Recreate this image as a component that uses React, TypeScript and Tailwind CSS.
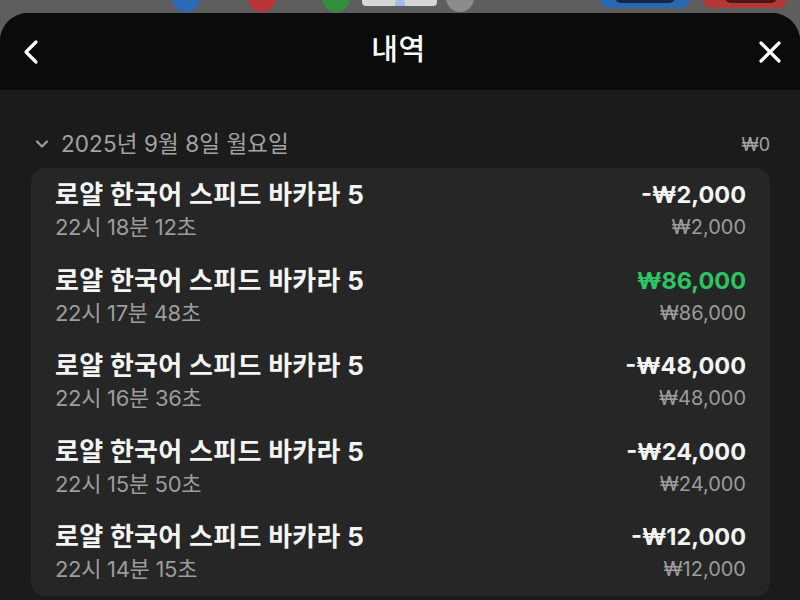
import React from 'react';

type Entry = {
  game: string;
  time: string;
  amount: string;
  bet: string;
  win?: boolean;
};

const entries: Entry[] = [
  { game: '로얄 한국어 스피드 바카라 5', time: '22시 18분 12초', amount: '-₩2,000', bet: '₩2,000' },
  { game: '로얄 한국어 스피드 바카라 5', time: '22시 17분 48초', amount: '₩86,000', bet: '₩86,000', win: true },
  { game: '로얄 한국어 스피드 바카라 5', time: '22시 16분 36초', amount: '-₩48,000', bet: '₩48,000' },
  { game: '로얄 한국어 스피드 바카라 5', time: '22시 15분 50초', amount: '-₩24,000', bet: '₩24,000' },
  { game: '로얄 한국어 스피드 바카라 5', time: '22시 14분 15초', amount: '-₩12,000', bet: '₩12,000' },
];

const font = { fontFamily: 'Inter, "Noto Sans CJK KR", sans-serif' };

// dimmed app icons peeking out behind the sheet
const Backdrop = () => (
  <div className="h-[13px] bg-[#5e5e5e] overflow-hidden flex items-start pl-[172px]">
    <div className="-mt-[16px] w-[28px] h-[28px] shrink-0 rounded-full bg-[#2b6bb8]" />
    <div className="-mt-[16px] ml-[48px] w-[28px] h-[28px] shrink-0 rounded-full bg-[#b93436]" />
    <div className="-mt-[16px] ml-[46px] w-[28px] h-[28px] shrink-0 rounded-full bg-[#2f8f3c]" />
    <div className="-mt-[10px] ml-[12px] w-[75px] h-[16px] shrink-0 rounded-[4px] bg-[#d6d6d6] flex justify-center items-end">
      <div className="w-[10px] h-[8px] rounded-t-full bg-[#9cc2ea]" />
    </div>
    <div className="-mt-[16px] ml-[9px] w-[28px] h-[28px] shrink-0 rounded-full bg-[#8c8c8c]" />
    <div className="-mt-[10px] ml-[126px] w-[90px] h-[18px] shrink-0 rounded-[8px] bg-[#2a68b0] flex justify-center">
      <div className="w-[60px] h-[13px] rounded-[6px] bg-[#12284a]" />
    </div>
    <div className="-mt-[10px] ml-[13px] w-[84px] h-[18px] shrink-0 rounded-[8px] bg-[#b53838] flex justify-end pr-[10px]">
      <div className="w-[52px] h-[13px] rounded-[6px] bg-[#4a1616]" />
    </div>
  </div>
);

const Row = ({ entry }: { entry: Entry }) => (
  <div className="flex justify-between items-start pt-[11px] pb-[12.5px]">
    <div className="flex flex-col">
      <span className="text-[26px] leading-[32px] font-bold text-[#f4f4f4] tracking-[0.3px]">{entry.game}</span>
      <span className="mt-[2px] text-[22px] leading-[28px] text-[#9c9c9c] tracking-[-0.3px]">{entry.time}</span>
    </div>
    <div className="flex flex-col items-end">
      <span className={`text-[23.5px] leading-[32px] font-bold ${entry.win ? 'text-[#2bc662]' : 'text-[#f4f4f4]'}`}>
        {entry.amount}
      </span>
      <span className="mt-[2px] text-[20px] leading-[28px] text-[#9c9c9c]">{entry.bet}</span>
    </div>
  </div>
);

export default function App() {
  return (
    <div className="w-[800px] h-[600px] overflow-hidden bg-[#5e5e5e]" style={font}>
      <Backdrop />
      <div className="rounded-t-[28px] overflow-hidden bg-[#1b1b1b] h-[587px]">
        {/* Header */}
        <div className="h-[77px] bg-[#0b0b0b] flex items-center justify-between pl-[22px] pr-[17px]">
          <svg width="18" height="26" viewBox="0 0 18 26" fill="none">
            <path d="M14 3L4 13l10 10" stroke="#fff" strokeWidth="3.2" strokeLinecap="round" strokeLinejoin="round" />
          </svg>
          <span className="text-[29px] font-medium text-white -mt-[4px] tracking-[0.5px]">내역</span>
          <svg width="26" height="26" viewBox="0 0 26 26" fill="none">
            <path d="M4 4l18 18M22 4L4 22" stroke="#fff" strokeWidth="3.2" strokeLinecap="round" />
          </svg>
        </div>

        {/* Body */}
        <div className="px-[30px] pt-[41px]">
          <div className="flex items-center justify-between h-[26px] mb-[11px]">
            <div className="flex items-center gap-[12px] pl-[5px]">
              <svg width="14" height="10" viewBox="0 0 14 10" fill="none">
                <path d="M2 2.5l5 5 5-5" stroke="#a0a0a0" strokeWidth="2.2" strokeLinecap="round" strokeLinejoin="round" />
              </svg>
              <span className="text-[22.5px] text-[#a3a3a3] tracking-[0.1px]">2025년 9월 8일 월요일</span>
            </div>
            <span className="text-[18px] text-[#a3a3a3]">₩0</span>
          </div>

          <div className="ml-[1px] bg-[#262626] rounded-[14px] px-[24px]">
            {entries.map((e, i) => (
              <Row key={i} entry={e} />
            ))}
          </div>
        </div>
      </div>
    </div>
  );
}
